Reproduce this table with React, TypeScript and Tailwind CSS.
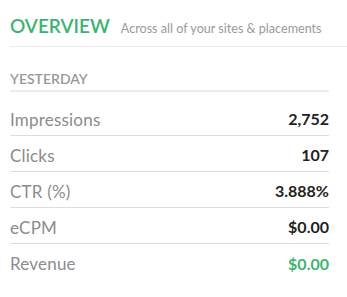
const rows = [
  { label: "Impressions", value: "2,752" },
  { label: "Clicks", value: "107" },
  { label: "CTR (%)", value: "3.888%" },
  { label: "eCPM", value: "$0.00" },
  { label: "Revenue", value: "$0.00", green: true },
];

export default function App() {
  return (
    <div className="h-[297px] w-[347px] bg-white pl-[10px] font-['Lato','Liberation_Sans',sans-serif]">
      <div className="flex items-baseline gap-[11px] border-b border-[#ececec] pt-[15px] pb-[7px]">
        <h1 className="text-[19px] font-semibold leading-[22px] text-[#3cb371]">OVERVIEW</h1>
        <span className="text-[12.6px] text-[#9a9a9a]">Across all of your sites &amp; placements</span>
      </div>

      <div className="mr-[18px] mt-[24px]">
        <h2 className="border-b-2 border-[#ececec] pb-[3px] text-[14px] font-semibold leading-[16px] text-[#999]">
          YESTERDAY
        </h2>
        <div className="mt-[8px]">
          {rows.map((r, i) => (
            <div
              key={r.label}
              className={`flex h-[36px] items-center justify-between pt-[4px] ${
                i < rows.length - 1 ? "border-b border-[#dddddd]" : ""
              }`}
            >
              <span className="text-[17px] tracking-[0.2px] text-[#8c8c8c]">{r.label}</span>
              <span className={`text-[16px] font-bold ${r.green ? "text-[#3cb371]" : "text-[#222]"}`}>{r.value}</span>
            </div>
          ))}
        </div>
      </div>
    </div>
  );
}
